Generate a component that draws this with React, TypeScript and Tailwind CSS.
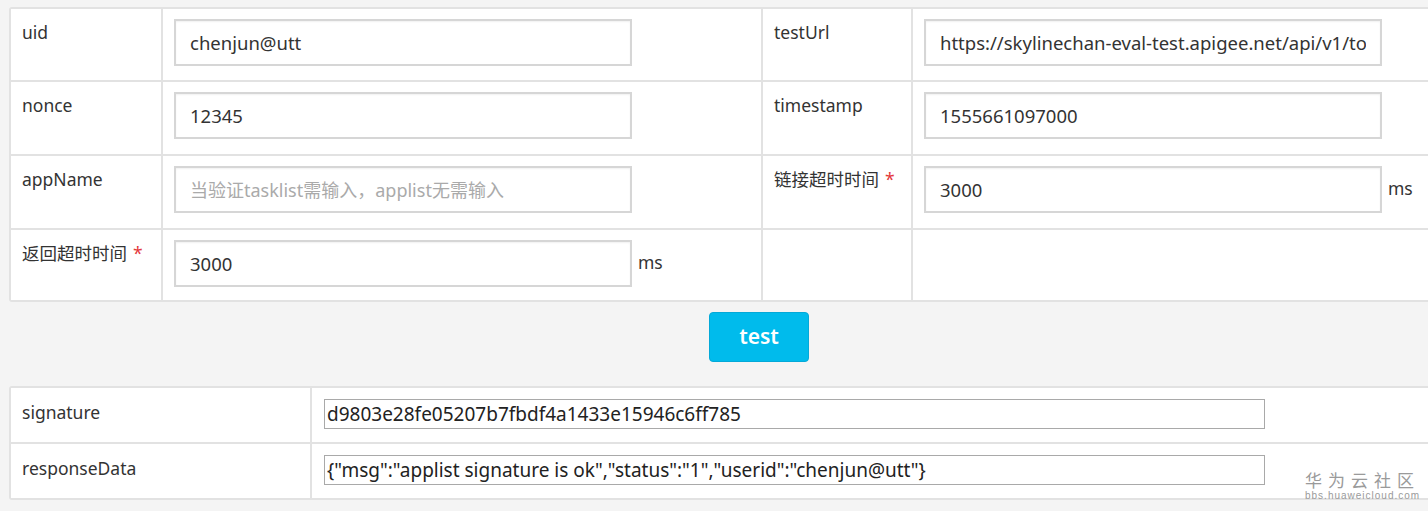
import React from 'react';

const font = { fontFamily: '"Noto Sans", "Noto Sans CJK SC", sans-serif' };

const TextInput = ({ value, placeholder }: { value?: string; placeholder?: string }) => (
  <input
    readOnly
    defaultValue={value}
    placeholder={placeholder}
    className="h-[47px] w-[458px] border-2 border-[#d6d6d6] bg-white px-[14px] text-[18.5px] text-[#333] shadow-[inset_0_1px_2px_rgba(0,0,0,0.06)] outline-none placeholder:text-[18px] placeholder:text-[#aaa]"
  />
);

const Label = ({ children, required }: { children: React.ReactNode; required?: boolean }) => (
  <div className="bg-white px-[11px] pt-[10px] text-[17.5px] text-[#333]">
    {children}
    {required && <span className="ml-[6px] text-[#e4393c]">*</span>}
  </div>
);

const Field = ({ children, unit }: { children: React.ReactNode; unit?: string }) => (
  <div className="flex items-start gap-[6px] bg-white pl-[11px] pt-[10px]">
    {children}
    {unit && <span className="pt-[9px] text-[17.5px] text-[#333]">{unit}</span>}
  </div>
);

const ResultRow = ({ label, value }: { label: string; value: string }) => (
  <>
    <div className="bg-white px-[11px] pt-[11px] text-[17.5px] text-[#333]">{label}</div>
    <div className="bg-white pl-[12px] pt-[11px]">
      <input
        readOnly
        defaultValue={value}
        className="h-[30px] w-[941px] border border-[#a9a9a9] bg-white px-[2px] text-[19px] text-[#222] outline-none"
      />
    </div>
  </>
);

export default function App() {
  return (
    <div className="relative h-[511px] w-[1428px] overflow-hidden bg-[#f4f4f4]" style={font}>
      <div className="pl-[9px] pt-[7px]">
        <div className="grid w-[1520px] grid-cols-[150px_598px_148px_1fr] grid-rows-[71px_72px_72px_70px] gap-[2px] rounded-[3px] bg-[#e2e2e2] p-[2px]">
          <Label>uid</Label>
          <Field><TextInput value="chenjun@utt" /></Field>
          <Label>testUrl</Label>
          <Field><TextInput value="https://skylinechan-eval-test.apigee.net/api/v1/token" /></Field>

          <Label>nonce</Label>
          <Field><TextInput value="12345" /></Field>
          <Label>timestamp</Label>
          <Field><TextInput value="1555661097000" /></Field>

          <Label>appName</Label>
          <Field><TextInput placeholder="当验证tasklist需输入，applist无需输入" /></Field>
          <Label required>链接超时时间</Label>
          <Field unit="ms"><TextInput value="3000" /></Field>

          <Label required>返回超时时间</Label>
          <Field unit="ms"><TextInput value="3000" /></Field>
          <div className="bg-white" />
          <div className="bg-white" />
        </div>
      </div>

      <div className="pl-[709px] pt-[10px]">
        <button className="h-[50px] w-[100px] rounded-[4px] border border-[#04a9d8] bg-[#00bbec] text-[21px] font-semibold text-white">
          test
        </button>
      </div>

      <div className="pl-[9px] pt-[24px]">
        <div className="grid w-[1520px] grid-cols-[299px_1fr] grid-rows-[54px_54px] gap-[2px] rounded-[3px] bg-[#e2e2e2] p-[2px]">
          <ResultRow label="signature" value="d9803e28fe05207b7fbdf4a1433e15946c6ff785" />
          <ResultRow label="responseData" value={'{"msg":"applist signature is ok","status":"1","userid":"chenjun@utt"}'} />
        </div>
      </div>

      <div className="absolute left-[1305px] top-[470px] flex flex-col items-center whitespace-nowrap text-[#9a9a9a]">
        <span className="text-[17px] leading-[20px] tracking-[6px]" style={{ fontFamily: '"Noto Sans CJK SC", sans-serif' }}>华为云社区</span>
        <span className="text-[10px] leading-[11px] tracking-[1px]" style={{ fontFamily: '"Liberation Sans", sans-serif' }}>bbs.huaweicloud.com</span>
      </div>
    </div>
  );
}
